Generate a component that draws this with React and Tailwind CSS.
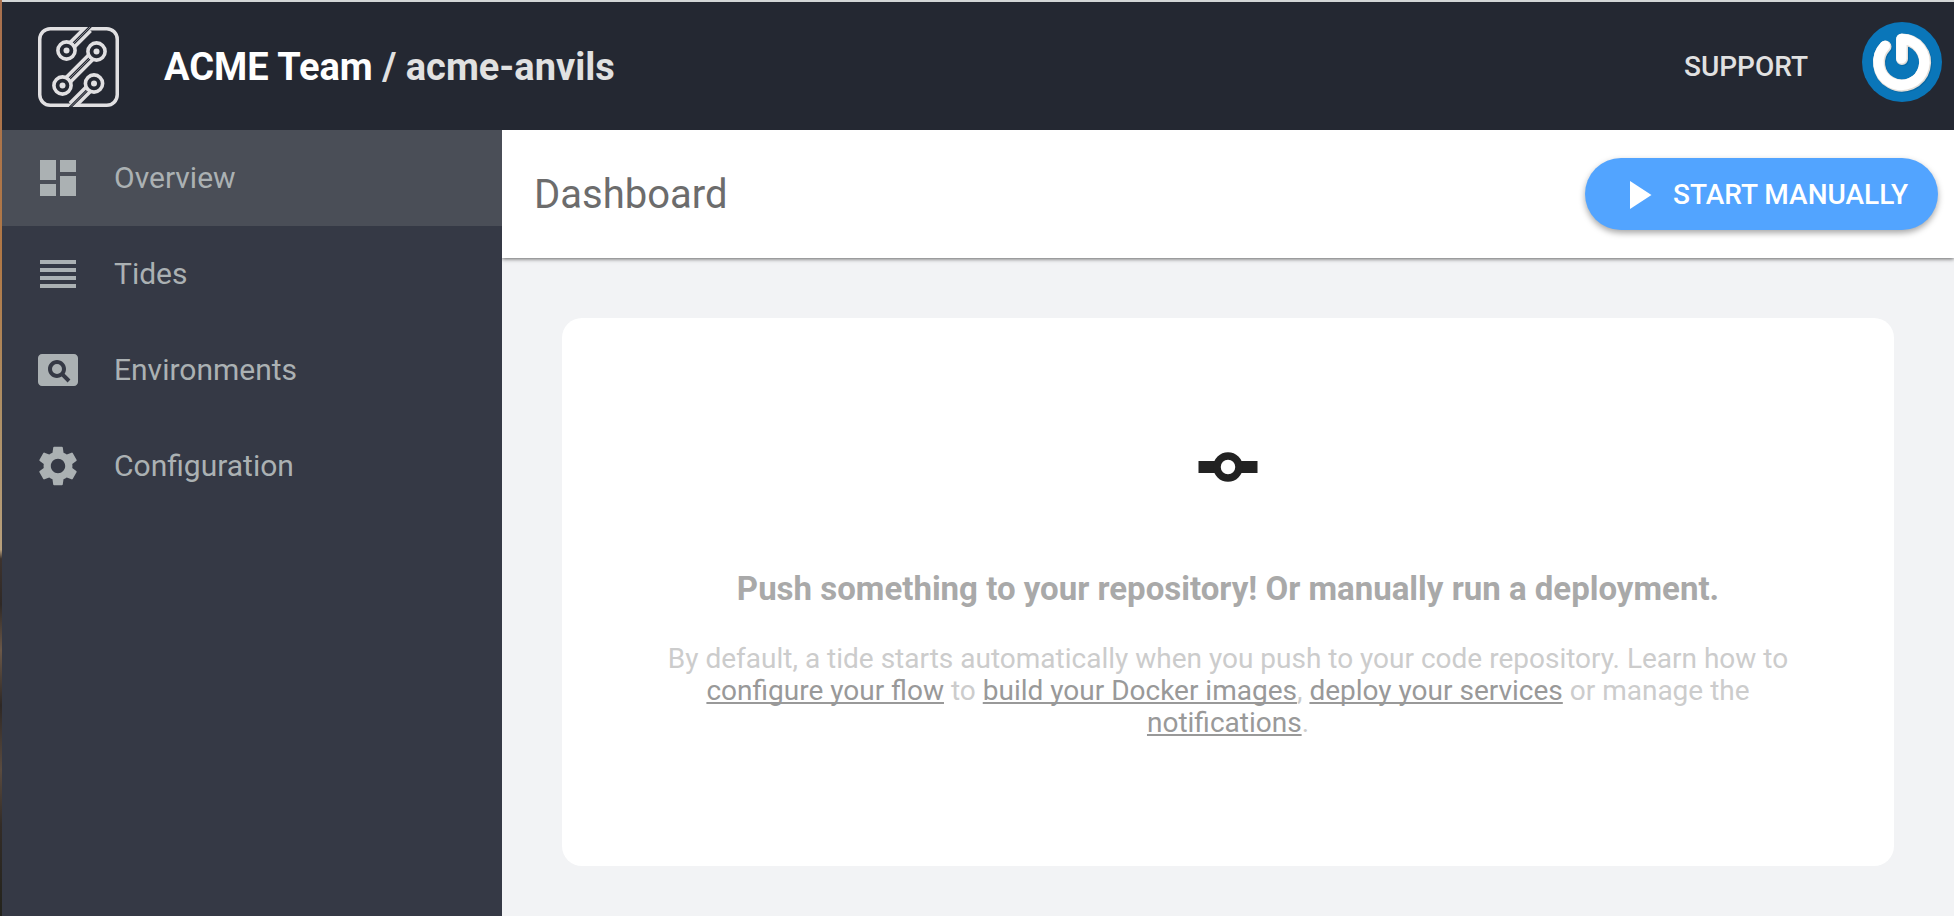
import React from "react";
import { MdDashboard, MdReorder, MdPageview, MdSettings } from "react-icons/md";

const NAV = [
  { label: "Overview", Icon: MdDashboard, active: true },
  { label: "Tides", Icon: MdReorder },
  { label: "Environments", Icon: MdPageview },
  { label: "Configuration", Icon: MdSettings },
];

function Logo() {
  const nodes = [
    [28.5, 23.5],
    [58.5, 24.5],
    [24.5, 58.5],
    [56, 56.5],
  ];
  return (
    <svg viewBox="0 0 82 80" className="h-20 w-[82px]" fill="none" stroke="#e1e0e2" aria-hidden="true">
      <rect x="1.75" y="1.75" width="77.5" height="76.5" rx="10.5" strokeWidth="3.5" />
      <g strokeWidth="9.6">
        <path d="M30 22 50.5 1.5" />
        <path d="M26 57 57 26" />
        <path d="M54.5 58 34 78.5" />
      </g>
      <g stroke="#242832" strokeWidth="2.6">
        <path d="M30 22 53 -1" />
        <path d="M26 57 57 26" />
        <path d="M54.5 58 31.5 81" />
      </g>
      <g strokeWidth="0.8" opacity="0.6">
        <path d="M30 22 52 0" />
        <path d="M26 57 57 26" />
        <path d="M54.5 58 33 79.5" />
      </g>
      {nodes.map(([x, y]) => (
        <g key={x}>
          <circle cx={x} cy={y} r="8.6" fill="#242832" strokeWidth="3.6" />
          <circle cx={x} cy={y} r="3" fill="#e1e0e2" stroke="none" />
        </g>
      ))}
    </svg>
  );
}

function Avatar() {
  const mark = "M23.5 24.5A23 23 0 1 0 40 17.5V37";
  return (
    <svg viewBox="0 0 80 80" className="size-20" fill="none" aria-hidden="true">
      <circle cx="40" cy="40" r="40" fill="#0a76b9" />
      <g strokeLinecap="round" strokeLinejoin="round">
        <path d={mark} stroke="#07609a" strokeWidth="12" transform="translate(1 1)" opacity=".6" />
        <path d={mark} stroke="#e4dfd9" strokeWidth="12" />
        <path d={mark} stroke="#ffffff" strokeWidth="10.4" transform="translate(-0.6 -0.6)" />
      </g>
    </svg>
  );
}

function DocLink({ children }) {
  return (
    <a
      href="#docs"
      className="text-[#999999] underline decoration-2 underline-offset-2 [text-decoration-skip-ink:none]"
    >
      {children}
    </a>
  );
}

export default function App() {
  return (
    <div className="flex min-h-screen font-[Roboto,sans-serif] antialiased">
      <div className="w-0.5 shrink-0 bg-[linear-gradient(#a9714f,#b07846_28%,#ae9066_45%,#b8a07c_60%,#3d332e_61%,#2f2926_66%,#6b5848_71%,#2e2825_77%,#5a4b3f_84%,#332c27_90%,#23231c)]" />
      <div className="flex grow flex-col">
        <header className="flex h-[130px] shrink-0 items-center border-t-2 border-[#d3d6d7] bg-[#242832] pt-0.5 pr-3 pl-9">
          <a href="#home" aria-label="Home">
            <Logo />
          </a>
          <h1 className="ml-11 text-[38px] font-bold text-[#e1e1e1]">
            <a href="#team" className="text-white">ACME Team</a> / acme-anvils
          </h1>
          <a href="#support" className="ml-auto text-[28px] font-medium text-[#e1e1e1]">SUPPORT</a>
          <button type="button" aria-label="Account" className="mb-2.5 ml-[54px] rounded-full">
            <Avatar />
          </button>
        </header>
        <div className="flex grow">
          <nav className="w-[500px] shrink-0 bg-[#353945]">
            {NAV.map(({ label, Icon, active }) => (
              <a
                key={label}
                href={"#" + label.toLowerCase()}
                className={
                  "flex h-24 items-center gap-8 pl-8 text-[30px] text-[#abb1b3] " + (active ? "bg-[#4a4e57]" : "")
                }
              >
                <Icon className="size-12" />
                <span className="pb-0.5">{label}</span>
              </a>
            ))}
          </nav>
          <main className="flex grow flex-col overflow-hidden bg-[#f2f3f5]">
            <div className="flex h-32 shrink-0 items-center justify-between bg-white pr-4 pl-8 shadow-[0_1px_4px_rgba(0,0,0,0.6)]">
              <h2 className="pt-0.5 text-[40px] text-[#6c6c6c]">Dashboard</h2>
              <button
                type="button"
                className="flex h-[72px] items-center gap-5 rounded-full bg-[#52a4ff] pt-0.5 pr-[30px] pl-11 text-[28px] font-medium text-white shadow-[0_3px_6px_rgba(0,0,0,0.35)]"
              >
                <svg viewBox="0 0 24 28" className="h-7 w-6" fill="currentColor" aria-hidden="true">
                  <path d="M1 0 22.5 14 1 28Z" />
                </svg>
                START MANUALLY
              </button>
            </div>
            <section className="m-[60px] mb-[50px] flex grow flex-col items-center rounded-[20px] bg-white px-[100px] pt-[119px] text-center">
              <svg viewBox="0 0 60 60" className="size-[60px]" fill="none" stroke="#222" aria-hidden="true">
                <path d="M0.5 30H18M42 30H59.5" strokeWidth="12" />
                <circle cx="30" cy="30" r="11" strokeWidth="7.5" />
              </svg>
              <h3 className="mt-[72px] text-[33px] leading-10 font-bold text-[#a9a9a9]">
                Push something to your repository! Or manually run a deployment.
              </h3>
              <p className="mt-[34px] text-[28px] leading-8 text-[#cccccc]">
                By default, a tide starts automatically when you push to your code repository. Learn how to{" "}
                <DocLink>configure your flow</DocLink> to <DocLink>build your Docker images</DocLink>,{" "}
                <DocLink>deploy your services</DocLink> or manage the <DocLink>notifications</DocLink>.
              </p>
            </section>
          </main>
        </div>
      </div>
    </div>
  );
}
